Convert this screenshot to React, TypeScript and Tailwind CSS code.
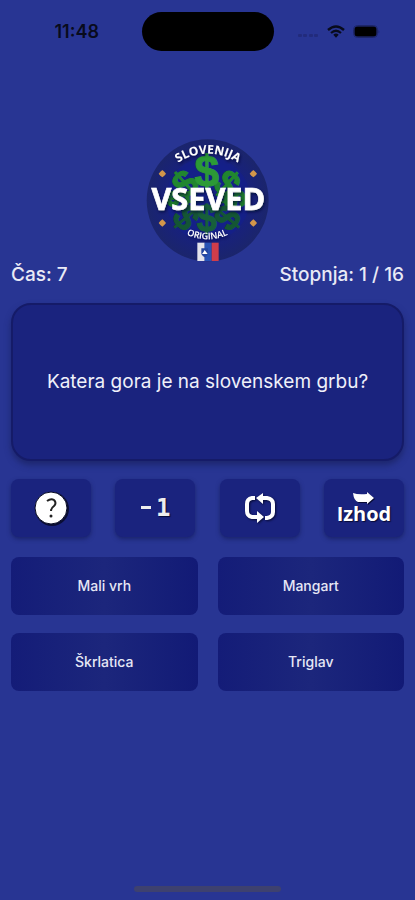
import type { ReactNode } from "react";

const dollars = [
  { x: 142, y: 158, size: 112, turn: -42, fill: "#21862f" },
  { x: 268, y: 158, size: 112, turn: 42, fill: "#21862f" },
  { x: 122, y: 206, size: 96, turn: -80, fill: "#1d7a2c" },
  { x: 290, y: 206, size: 96, turn: 80, fill: "#1d7a2c" },
  { x: 144, y: 260, size: 108, turn: 50, fill: "#145634" },
  { x: 268, y: 260, size: 108, turn: -50, fill: "#145634" },
  { x: 206, y: 262, size: 108, turn: 0, fill: "#17603a" },
  { x: 206, y: 124, size: 132, turn: 0, fill: "#2c9a36" },
];

const sparks = [
  [73, 128],
  [346, 128],
  [73, 276],
  [346, 276],
];

function Logo() {
  return (
    <svg viewBox="0 0 420 420" className="size-[140px]" role="img" aria-label="Vseved Slovenija Original">
      <defs>
        <radialGradient id="disc">
          <stop offset="0" stopColor="#16307c" />
          <stop offset="0.6" stopColor="#151f86" />
          <stop offset="0.68" stopColor="#18217c" />
          <stop offset="1" stopColor="#1b256c" />
        </radialGradient>
        <filter id="lift" x="-20%" y="-20%" width="140%" height="140%">
          <feDropShadow dx="3" dy="5" stdDeviation="4" floodColor="#050a30" floodOpacity="0.8" />
        </filter>
        <path id="topArc" d="M 95 117 A 159 159 0 0 1 325 117" />
        <path id="bottomArc" d="M 110 288 A 149 149 0 0 0 306 288" />
      </defs>
      <circle cx="209" cy="208" r="183" fill="url(#disc)" />
      <circle cx="210" cy="204" r="126" fill="#141f8a" opacity="0.7" />
      <g fontFamily="'Liberation Sans', Arial, sans-serif" fontWeight="700" textAnchor="middle">
        {dollars.map((d, i) => (
          <text
            key={i}
            x={0}
            y={d.size * 0.34}
            fontSize={d.size}
            fill={d.fill}
            stroke={d.fill}
            strokeWidth="3"
            transform={`translate(${d.x} ${d.y}) rotate(${d.turn})`}
          >
            $
          </text>
        ))}
      </g>
      {sparks.map(([x, y]) => (
        <path
          key={`${x}-${y}`}
          d={`M${x} ${y - 11}L${x + 6} ${y - 6}L${x + 11} ${y}L${x + 6} ${y + 6}L${x} ${y + 11}L${x - 6} ${y + 6}L${x - 11} ${y}L${x - 6} ${y - 6}Z`}
          fill="#d3964a"
        />
      ))}
      <g fontFamily="'Open Sans', 'Noto Sans', sans-serif" fill="#fff" textAnchor="middle" filter="url(#lift)">
        <text fontSize="36" fontWeight="700">
          <textPath href="#topArc" startOffset="50%">SLOVENIJA</textPath>
        </text>
        <text fontSize="27" fontWeight="600">
          <textPath href="#bottomArc" startOffset="50%">ORIGINAL</textPath>
        </text>
        <text x="211" y="237" fontSize="92" fontWeight="700" stroke="#fff" strokeWidth="2">VSEVED</text>
      </g>
      <g>
        <path d="M178 335h22v55h-22z" fill="#e4e4ec" />
        <path d="M200 335h21v55h-21z" fill="#2853b5" />
        <path d="M221 335h21v55h-21z" fill="#cf3d4a" />
        <path d="M190 352h20v16q-3 8-10 11q-7-3-10-11z" fill="#2446a0" />
        <path d="M192 369l5-7l3-5l4 5l5 7z" fill="#fff" />
      </g>
    </svg>
  );
}

function StatusBar() {
  return (
    <header className="grid grid-cols-[1fr_132px_1fr] items-center pt-3 text-[#080b1c]">
      <time className="pl-3 text-center text-lg leading-6 font-semibold">11:48</time>
      <div className="h-[39px] rounded-full bg-black" />
      <div className="flex items-center gap-2 pl-6">
        <svg viewBox="0 0 21 4" className="mt-2 h-1 w-[21px]" fill="#222b7c" aria-hidden="true">
          <rect x="0" y="0" width="4" height="3" rx="1" />
          <rect x="5" y="0" width="4" height="3" rx="1" />
          <rect x="11" y="0" width="4" height="3" rx="1" />
          <rect x="16" y="0" width="4" height="3" rx="1" />
        </svg>
        <svg viewBox="0 0 18 14" className="h-[14px] w-[18px]" fill="none" stroke="currentColor" aria-hidden="true">
          <path d="M1 5Q9-2 17 5" strokeWidth="2.4" />
          <path d="M4 8Q9 3.5 14 8" strokeWidth="2.2" />
          <path d="M6.300 9.700Q9 7.500 11.700 9.700L9 12.800Z" fill="currentColor" stroke="none" />
        </svg>
        <svg viewBox="0 0 27 13" className="h-[13px] w-[27px]" aria-hidden="true">
          <rect x="0.500" y="0.500" width="24" height="12" rx="4" fill="none" stroke="#1d2669" />
          <rect x="1.500" y="1.500" width="22" height="10" rx="3" fill="#000" />
          <path d="M25.500 4.500q1.500 2 0 4z" fill="#1d2669" />
        </svg>
      </div>
    </header>
  );
}

function Tool({ label, children }: { label: string; children: ReactNode }) {
  return (
    <button
      type="button"
      aria-label={label}
      className="flex h-[58px] w-20 flex-col items-center justify-center rounded-lg bg-[#1a237e] text-white shadow-[0_2px_4px_rgba(20,28,90,0.7)]"
    >
      {children}
    </button>
  );
}

function Answer({ text }: { text: string }) {
  return (
    <button
      type="button"
      className="h-[58px] rounded-lg bg-linear-to-r from-[#141c78] via-[#1c267c] to-[#121a76] text-sm font-medium text-[#e6e7f5]"
    >
      {text}
    </button>
  );
}

export default function App() {
  return (
    <div className="flex min-h-screen flex-col bg-[#283593] font-['Inter','Liberation_Sans',sans-serif]">
      <StatusBar />
      <main className="flex flex-col px-[11px] pt-20">
        <div className="flex justify-center">
          <Logo />
        </div>
        <div className="-mt-2 flex justify-between text-[19px] leading-6 font-medium text-[#e9eaf6]">
          <p>Čas: 7</p>
          <p>Stopnja: 1 / 16</p>
        </div>
        <section className="mt-4 flex h-[158px] items-center justify-center rounded-[20px] border-2 border-[#151b68] bg-[#1a237e] px-4 shadow-[0_4px_6px_rgba(26,35,100,0.8)]">
          <h1 className="text-center text-[19px] leading-6 text-[#eff0fa]">
            Katera gora je na slovenskem grbu?
          </h1>
        </section>
        <div className="mt-[18px] flex justify-between">
          <Tool label="Pomoč">
            <svg viewBox="0 0 40 40" className="size-10" aria-hidden="true">
              <circle cx="21" cy="21" r="17" fill="#0a0d35" />
              <circle cx="20" cy="20" r="16" fill="#fff" stroke="#080b25" />
              <path d="M16 13Q20 10 23 12Q26 15 23 18Q20 20 20 23" fill="none" stroke="#222" strokeWidth="2" />
              <circle cx="20" cy="28" r="1.500" fill="#222" />
            </svg>
          </Tool>
          <Tool label="Odštej 1">
            <span className="flex items-center gap-1 font-['DejaVu_Sans_Mono',monospace] text-2xl leading-8 font-bold text-[#eeeeee] [text-shadow:1px_1px_1px_#080b35]">
              <svg viewBox="0 0 12 4" className="h-1 w-3" aria-hidden="true">
                <path d="M1 0h10v3h-10z" fill="#eeeeee" />
              </svg>
              <span>1</span>
            </span>
          </Tool>
          <Tool label="Zamenjaj vprašanje">
            <svg viewBox="0 0 34 32" className="h-8 w-[34px] drop-shadow-[1px_1px_1px_#080b35]" aria-hidden="true">
              <g fill="none" stroke="#fff" strokeWidth="4" strokeLinejoin="round">
                <path d="M12 6H9Q4 7 4 12V19Q4 24 9 25H14" />
                <path d="M19 6H24Q30 7 30 12V20Q30 25 24 26H22" />
              </g>
              <path d="M13 6L20 1V12Z" fill="#fff" />
              <path d="M21 25L14 19V31Z" fill="#fff" />
            </svg>
          </Tool>
          <Tool label="Izhod">
            <svg viewBox="0 0 22 12" className="h-3 w-[22px] drop-shadow-[1px_1px_0_#080b35]" aria-hidden="true">
              <path d="M0 1Q5 3 14 2V0L21 6L14 12V10H5Q1 9 0 1Z" fill="#fff" />
            </svg>
            <span className="font-['Open_Sans',sans-serif] text-xl leading-5 font-bold [text-shadow:1px_1px_1px_#080b35]">
              Izhod
            </span>
          </Tool>
        </div>
        <div className="mt-5 grid grid-cols-2 gap-x-5 gap-y-[18px]">
          <Answer text="Mali vrh" />
          <Answer text="Mangart" />
          <Answer text="Škrlatica" />
          <Answer text="Triglav" />
        </div>
      </main>
      <div className="mx-auto mt-auto mb-2 h-[6px] w-[147px] rounded-full bg-[#3e416f]" />
    </div>
  );
}
